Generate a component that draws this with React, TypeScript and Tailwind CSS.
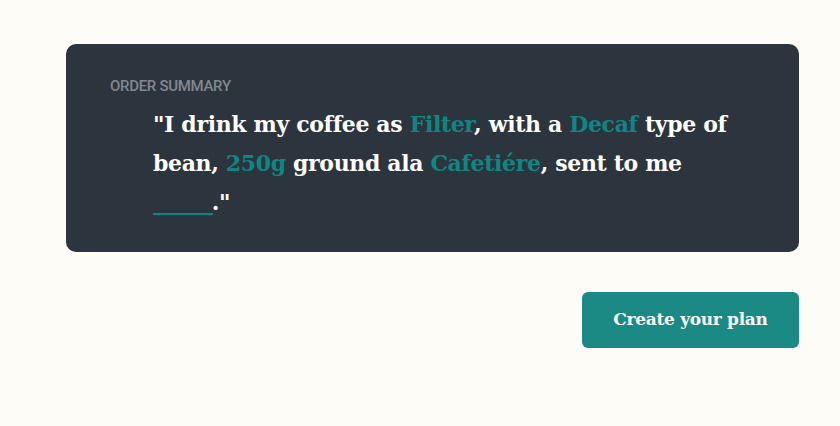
export default function App() {
  const hl = "text-[#0E8784]";
  return (
    <div className="min-h-[426px] w-full bg-[#FEFCF7] pt-[44px] pl-[66px] pr-[41px]">
      <section className="flex flex-col">
        <div className="rounded-[10px] bg-[#2C343E] pl-[44px] pr-[40px] pt-[32px] pb-[30px]">
          <h2 className="font-['Roboto',sans-serif] text-[15px] font-medium uppercase leading-[20px] tracking-[-0.3px] text-[#83888F]">
            Order summary
          </h2>
          <p className="mt-[9px] pl-[43px] font-['DejaVu_Serif',serif] text-[22px] font-bold leading-[39px] tracking-[-0.35px] text-white">
            "I drink my coffee as <span className={hl}>Filter</span>, with a{" "}
            <span className={hl}>Decaf</span> type of
            <br />
            bean, <span className={hl}>250g</span> ground ala{" "}
            <span className={hl}>Cafetiére</span>, sent to me
            <br />
            <span className={`${hl} tracking-[-1.2px]`}>______</span>."
          </p>
        </div>
        <div className="mt-[40px] flex justify-end">
          <button className="h-[56px] w-[217px] rounded-[6px] bg-[#1B8A84] font-['DejaVu_Serif',serif] text-[17px] font-bold tracking-[-0.3px] text-[#FEFCF7]">
            Create your plan
          </button>
        </div>
      </section>
    </div>
  );
}
